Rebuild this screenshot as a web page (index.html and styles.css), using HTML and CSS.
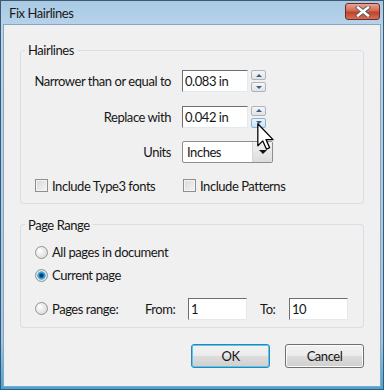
FILE: index.html
```html
<!DOCTYPE html>
<html lang="en">
<head>
  <meta charset="UTF-8" />
  <title>Fix Hairlines</title>
  <link rel="stylesheet" href="styles.css">
</head>
<body>
  <div class="window">
    <div class="titlebar">
      <span class="title">Fix Hairlines</span>
      <div class="close">
        <svg width="16" height="11" viewBox="0 0 16 11">
          <path d="M3 1.5 L13 9.5 M13 1.5 L3 9.5" stroke="#5a5a5a" stroke-width="4.2" stroke-linecap="square"/>
          <path d="M3 1.5 L13 9.5 M13 1.5 L3 9.5" stroke="#ffffff" stroke-width="2.4" stroke-linecap="square"/>
        </svg>
      </div>
    </div>

    <div class="content">
      <fieldset class="group">
        <legend>Hairlines</legend>
        <div class="form-grid">
          <span class="field-label">Narrower than or equal to</span>
          <div class="spin-field">
            <div class="textbox">0.083 in</div>
            <div class="spinner">
              <span class="spin up"></span>
              <span class="spin down"></span>
            </div>
          </div>

          <span class="field-label">Replace with</span>
          <div class="spin-field">
            <div class="textbox">0.042 in</div>
            <div class="spinner">
              <span class="spin up"></span>
              <span class="spin down hover"></span>
            </div>
          </div>

          <span class="field-label">Units</span>
          <div class="combo">
            <span class="combo-text">Inches</span>
            <span class="combo-arrow"></span>
          </div>

          <label class="check first"><span class="box"></span>Include Type3 fonts</label>
          <label class="check"><span class="box"></span>Include Patterns</label>
        </div>
      </fieldset>

      <fieldset class="group range">
        <legend>Page Range</legend>
        <div class="radio-list">
          <label class="radio"><span class="dot"></span>All pages in document</label>
          <label class="radio"><span class="dot on"></span>Current page</label>
          <div class="range-row">
            <label class="radio pages"><span class="dot"></span>Pages range:</label>
            <span class="from-label">From:</span>
            <div class="textbox small">1</div>
            <span class="to-label">To:</span>
            <div class="textbox small">10</div>
          </div>
        </div>
      </fieldset>

      <div class="buttons">
        <div class="btn default">OK</div>
        <div class="btn">Cancel</div>
      </div>
    </div>

    <svg class="cursor" width="18" height="27" viewBox="0 0 12.5 19">
      <path d="M0.5 0.5 L0.5 16 L4 12.6 L6.6 18.4 L8.8 17.4 L6.3 11.7 L11.2 11.7 Z" fill="#ffffff" stroke="#000000" stroke-width="0.9" stroke-linejoin="round"/>
    </svg>
  </div>
</body>
</html>
```

FILE: styles.css
```css
body {
  margin: 0;
  font-family: Lato, "Noto Sans", sans-serif;
  font-size: 13px;
  letter-spacing: -0.45px;
  color: #161616;
}
.window {
  position: relative;
  width: 384px;
  height: 390px;
  box-sizing: border-box;
  border: 1px solid #3d5873;
  background: linear-gradient(#a9c9e3, #b9d5ec 30px, #9fc8e6 340px, #3aa8da);
  display: flex;
  flex-direction: column;
  padding: 0 2px 2px 2px;
}
.titlebar {
  height: 23px;
  display: flex;
  align-items: center;
  justify-content: space-between;
  padding-left: 6px;
}
.title {
  font-size: 13px;
  color: #1a1a1a;
}
.close {
  width: 33px;
  height: 15px;
  margin-right: 1px;
  margin-top: -2px;
  border: 1px solid #6e2a23;
  border-radius: 3px;
  background: linear-gradient(#e8a597, #d2694f 45%, #c0422a 55%, #d36f57);
  display: flex;
  align-items: center;
  justify-content: center;
}
.content {
  flex: 1;
  background: #f0f0f0;
  border: 1px solid #8aa6bf;
  padding: 17px 16px 0 16px;
}
.group {
  margin: 0;
  padding: 0;
  border: 1px solid #d5dfe5;
  border-radius: 3px;
}
.group legend {
  margin-left: 4px;
  padding: 0 3px;
  line-height: 16px;
}
.form-grid {
  display: grid;
  grid-template-columns: 150px auto;
  column-gap: 11px;
  row-gap: 13.5px;
  align-items: center;
  justify-items: start;
  padding: 12px 0 9px 0;
}
.form-grid .field-label {
  justify-self: end;
}
.spin-field {
  display: flex;
  align-items: center;
  gap: 3px;
}
.textbox {
  box-sizing: border-box;
  width: 66px;
  height: 22px;
  background: #ffffff;
  border: 1px solid #e3e9ef;
  border-top-color: #6e6e6e;
  border-left-color: #6e6e6e;
  padding-left: 2px;
  line-height: 20px;
}
.spinner {
  display: flex;
  flex-direction: column;
  gap: 2px;
}
.spin {
  box-sizing: border-box;
  width: 15px;
  height: 10px;
  border: 1px solid #a9b5c1;
  border-radius: 2px;
  background: linear-gradient(#f6f6f6, #e2e2e2);
  display: flex;
  align-items: center;
  justify-content: center;
}
.spin.hover {
  border-color: #8db2d0;
  background: linear-gradient(#eaf5fc, #c9e3f5);
}
.spin::after {
  content: "";
  border-left: 3px solid transparent;
  border-right: 3px solid transparent;
}
.spin.up::after {
  border-bottom: 3px solid #3d5a8c;
}
.spin.down::after {
  border-top: 3px solid #3d5a8c;
}
.combo {
  box-sizing: border-box;
  width: 91px;
  height: 22px;
  display: flex;
  border: 1px solid #8e8e8e;
  border-radius: 2px;
  background: #ffffff;
}
.combo-text {
  flex: 1;
  padding-left: 4px;
  line-height: 20px;
}
.combo-arrow {
  width: 19px;
  background: linear-gradient(#f2f2f2, #dcdcdc);
  border-left: 1px solid #d6d6d6;
  display: flex;
  align-items: center;
  justify-content: center;
}
.combo-arrow::after {
  content: "";
  border-left: 4px solid transparent;
  border-right: 4px solid transparent;
  border-top: 4px solid #111111;
}
.check {
  display: flex;
  align-items: center;
  gap: 4px;
  margin-top: 1px;
  margin-left: 1px;
}
.check.first {
  margin-left: 14px;
}
.box {
  box-sizing: border-box;
  width: 13px;
  height: 13px;
  border: 1px solid #8f8f8f;
  background: linear-gradient(135deg, #d9d9d9, #f4f4f4);
  box-shadow: inset 0 0 0 1px #f4f4f4;
}
.radio-list {
  display: flex;
  flex-direction: column;
  padding: 11px 0 7px 14px;
}
.radio {
  display: flex;
  align-items: center;
  gap: 4px;
  height: 17px;
}
.radio + .radio {
  margin-top: 6px;
}
.radio.pages {
  width: 110px;
}
.dot {
  box-sizing: border-box;
  width: 13px;
  height: 13px;
  border-radius: 50%;
  border: 1px solid #929292;
  background: radial-gradient(circle at 35% 35%, #ffffff, #d2d2d2);
}
.dot.on {
  background: radial-gradient(circle, #0d3d66 0 1.5px, #1e8bc5 2.5px, #5cc2ee 4px, #e9e9e9 4.6px, #cfcfcf);
}
.range-row {
  display: flex;
  align-items: center;
  margin-top: 14px;
}
.from-label {
  width: 43px;
}
.to-label {
  margin-left: 13px;
  width: 29px;
}
.textbox.small {
  width: 59px;
  height: 22px;
}
.range {
  margin-top: 13px;
}
.buttons {
  display: flex;
  justify-content: flex-end;
  gap: 15px;
  margin-top: 16px;
}
.btn {
  box-sizing: border-box;
  width: 79px;
  height: 24px;
  border: 1px solid #707070;
  border-radius: 3px;
  background: linear-gradient(#f2f2f2 0, #ebebeb 50%, #dddddd 50%, #cfcfcf);
  box-shadow: inset 0 0 0 1px #fbfbfb;
  text-align: center;
  line-height: 22px;
}
.btn.default {
  border-color: #3c7fb1;
  box-shadow: inset 0 0 0 1px #48d0f4;
}
.cursor {
  position: absolute;
  left: 256px;
  top: 122px;
}
```
